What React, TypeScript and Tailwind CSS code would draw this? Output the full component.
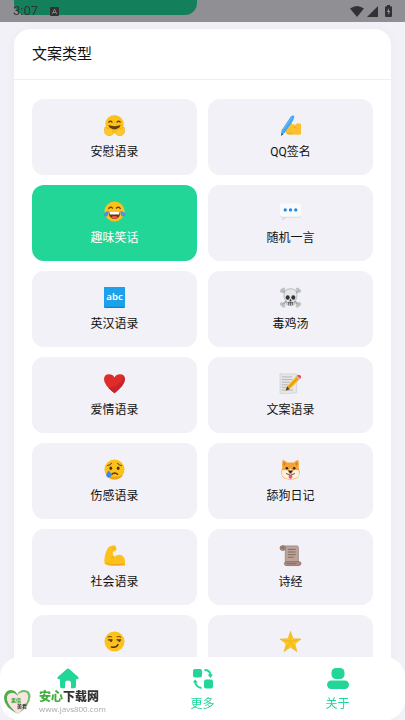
import React from 'react';

const yellowFace = <circle cx="12" cy="12" r="11.500" fill="#fcc21b" />;

const icons = {
  hug: (
    <>
      <circle cx="12" cy="10.5" r="10.5" fill="#fcc21b" />
      <path d="M5.5 8.2q1.8-2.4 3.6 0M14.900 8.200q1.800-2.400 3.600 0" stroke="#5d3b0a" strokeWidth="1.500" fill="none" strokeLinecap="round" />
      <path d="M5 11.500q7 2.500 14 0-1.300 5-7 5t-7-5z" fill="#6a3f10" />
      <path
        d="M.8 14.200q1.200-1 2.200.8l.8 1q3-1.800 5.700.7 2 2.600.4 5.300-2 2.400-5.500 1.500Q1 22.500.5 19z"
        fill="#ffca28"
        stroke="#e9a51c"
        strokeWidth=".7"
      />
      <path
        d="M23.200 14.200q-1.200-1-2.200.8l-.8 1q-3-1.800-5.700.7-2 2.600-.4 5.300 2 2.400 5.500 1.500Q23 22.500 23.500 19z"
        fill="#ffca28"
        stroke="#e9a51c"
        strokeWidth=".7"
      />
    </>
  ),
  write: (
    <>
      <path d="M24 10v12q-4 1-7 .3-5 .8-9-.8-2.500-1-2-2.700l-2.800-.3Q1 17.500 2.500 16l5-4.500 3.500-2.200q1.800-.5 3 .7l3 1.500 3-2z" fill="#fbc02d" />
      <path d="M8 21.300l5 .2M16 14l3 1" stroke="#e09a1a" strokeWidth=".9" />
      <path d="M12.500 1.500Q15-.5 16.500 1.500 16 5 13 9.500L5.500 20 1 23.500l.8-5.700z" fill="#42a5f5" />
      <path d="M14 2L3 18" stroke="#74bff8" strokeWidth="1" />
      <path d="M1.800 20.500L1 24l3-2z" fill="#35617d" />
    </>
  ),
  joy: (
    <>
      {yellowFace}
      <path d="M5.500 8.500q2-3 4.200-.3M14.300 8.200q2.200-2.700 4.200.3" stroke="#5d3b0a" strokeWidth="1.500" fill="none" strokeLinecap="round" />
      <path d="M5.500 12.500h13q0 8-6.500 8t-6.500-8z" fill="#6b3410" />
      <path d="M6.200 12.500h11.600l-.5 3H6.700z" fill="#fff" />
      <path d="M8 18.500q4-2.800 8 0-4 3.300-8 0z" fill="#ff5252" />
      <path d="M5 11Q5.800 16.500 3 17.500q-2.500.7-3.500-1.500-.2-3 5.500-5zM19 11Q18.200 16.500 21 17.500q2.500.7 3.500-1.500.2-3-5.500-5z" fill="#4f8df0" />
    </>
  ),
  speech: (
    <>
      <path d="M2.500 3h19Q24 3 24 5.500v11q0 2.500-2.500 2.500H6.500Q5 22 2 22q1.500-1.500 1-3Q0 19 0 16.500v-11Q0 3 2.500 3z" fill="#d7dce0" />
      <path d="M2.500 2.500h19Q24 2.500 24 5v10.500q0 2.500-2.500 2.500h-19Q0 18 0 15.500V5q0-2.500 2.500-2.500z" fill="#fafafa" />
      <circle cx="6" cy="10.200" r="1.900" fill="#1e88e5" />
      <circle cx="12" cy="10.200" r="1.900" fill="#1e88e5" />
      <circle cx="18" cy="10.200" r="1.900" fill="#1e88e5" />
    </>
  ),
  abc: (
    <>
      <rect width="24" height="24" rx="1.500" fill="#0288d1" />
      <rect width="24" height="22.500" rx="1.500" fill="#1da1ea" />
      <text x="12" y="15" textAnchor="middle" className="font-['Noto_Sans',sans-serif] text-[11px] font-semibold" fill="#fff">
        abc
      </text>
    </>
  ),
  skull: (
    <>
      <path d="M3 4.500l18 15.500M21 4.500L3 20" stroke="#a9adb0" strokeWidth="2.200" />
      <g fill="#c5c9cb" stroke="#9a9ea1" strokeWidth=".5">
        <circle cx="2" cy="4.500" r="1.700" />
        <circle cx="4" cy="2.800" r="1.700" />
        <circle cx="22" cy="4.500" r="1.700" />
        <circle cx="20" cy="2.800" r="1.700" />
        <circle cx="2" cy="19.500" r="1.700" />
        <circle cx="4" cy="21.500" r="1.700" />
        <circle cx="22" cy="19.500" r="1.700" />
        <circle cx="20" cy="21.500" r="1.700" />
      </g>
      <path d="M12 2q7.500 0 7.500 8 0 3-1.500 5l-1.500 1v4q-4.500 2.500-9 0v-4L6 15q-1.500-2-1.500-5 0-8 7.500-8z" fill="#e4e7e8" stroke="#9a9ea1" strokeWidth=".7" />
      <ellipse cx="8.800" cy="12" rx="2.300" ry="2.500" fill="#333" />
      <ellipse cx="15.200" cy="12" rx="2.300" ry="2.500" fill="#333" />
      <path d="M12 13.500l1.500 2.700h-3z" fill="#333" />
      <path d="M8.500 18h7M10 17v4M12 17v4M14 17v4" stroke="#444" strokeWidth=".9" />
    </>
  ),
  heart: (
    <>
      <path d="M12 23Q0 14 0 7.500 0 1.500 5.800 1.500 10 1.500 12 5q2-3.500 6.200-3.500Q24 1.500 24 7.500 24 14 12 23z" fill="#e02b2b" />
      <path d="M23 4q2 6-3 11-4 5-8 8Q8 20 5 17q12-1 18-13z" fill="#c9242a" />
    </>
  ),
  memo: (
    <>
      <path d="M0 1h19v21.500q-9 1.500-19 .8z" fill="#e5e7e8" stroke="#c4c8ca" strokeWidth=".6" />
      <path d="M2 4.500h12M2 7.500h12M2 10.500h9M2 13.500h7M2 16.500h5M2 19.500h13" stroke="#a5abae" strokeWidth=".9" />
      <path d="M19 3.500l3.500 3.500L11 18.500l-4.500 1.800L8 15z" fill="#fbb917" />
      <path d="M20.800 5.200L9.500 16.800" stroke="#e58b16" strokeWidth="1.300" />
      <path d="M8 15l3 3.500-4.500 1.800z" fill="#574235" />
      <path d="M18 4.500l1.500-1.500 3.500 3.500-1.500 1.500z" fill="#b8bec1" />
      <path d="M19.500 3q1.500-2 3.500-.5t.2 4.200z" fill="#ef4455" />
    </>
  ),
  cry: (
    <>
      {yellowFace}
      <path d="M2 17.500q9 6 20 .5-3.500 5.500-10 5.500T2 17.500z" fill="#f2a117" />
      <path d="M4 7.500Q7 7 8.500 4.800M20 7.500Q17 7 15.500 4.800" stroke="#6d4413" strokeWidth="1.200" fill="none" strokeLinecap="round" />
      <ellipse cx="7.800" cy="10.500" rx="1.600" ry="2" fill="#4e300d" />
      <ellipse cx="16.200" cy="10.500" rx="1.600" ry="2" fill="#4e300d" />
      <path d="M9 17.500q3-3 6.500 0" stroke="#4e300d" strokeWidth="1.600" fill="none" strokeLinecap="round" />
      <path d="M5.500 13q4 4 2.500 7-3 2.200-5 0-1.500-2.500 2.500-7z" fill="#4285e8" />
    </>
  ),
  dog: (
    <>
      <path d="M3 1q3 0 5 3h8q2-3 5-3 1 4 .3 8l1.200 6q-1 7-5.500 7.500-5 2-10 0-5-.5-5.500-7.500L2.700 9Q2 5 3 1z" fill="#f6a133" />
      <path d="M4.200 3.300Q5.800 4 6.500 5.500L4.500 8zM19.800 3.300Q18.200 4 17.500 5.500l2 2.500z" fill="#c77a35" />
      <path d="M2.500 13Q7 11 10 14l2-3.500 2 3.500q3-3 7.500-1 2 7.500-5 9.200-4.500 1.800-9 0-7-1.700-5-9.200z" fill="#fff1dc" />
      <circle cx="7.800" cy="10.500" r="1.500" fill="#3b2a22" />
      <circle cx="16.200" cy="10.500" r="1.500" fill="#3b2a22" />
      <path d="M9.500 13h5q0 3-2.500 3t-2.500-3z" fill="#302522" />
      <path d="M7 16.500q2.500 2 5 .5 2.500 1.500 5-.5" stroke="#4a3328" strokeWidth="1" fill="none" />
      <path d="M10 18h4v3.500q-2 2.500-4 0z" fill="#f0567a" />
    </>
  ),
  muscle: (
    <>
      <path
        d="M9 .8q3-1.300 4.500 1 1.500 2.700 0 4.700-1.700 1.300-3.300.7-.7 2.800 1.300 6.300 5-4 9.500-1.200 3 2.500 3 5.700v5.500q-9 1-17.500.2Q.5 23 .3 18.500.8 8 5 2.800 6.500 1 9 .8z"
        fill="#fcc21b"
      />
      <path d="M11.500 13.500q-1.500.3-3.500 2M1 21q9 2.500 22.500 1" stroke="#ea9f17" strokeWidth="1" fill="none" />
      <path d="M9 4.200l3.500-.8" stroke="#ea9f17" strokeWidth=".8" />
    </>
  ),
  scroll: (
    <>
      <path d="M3 1h16.500q1.500 0 1.500 2v17H6V6z" fill="#bca49a" stroke="#8b7066" strokeWidth=".7" />
      <path d="M0 3.500Q0 .8 3 .8T6.300 3.500Q6 6.500 3 6.300 0 6 0 3.500z" fill="#a98c80" stroke="#7e6258" strokeWidth=".8" />
      <path d="M2 3.500q1.500-1.300 2 .5" stroke="#674d43" fill="none" />
      <path d="M8 19h13.500Q24 19 24 21t-2.500 2.500H8q-3 0-3-2.200T8 19z" fill="#a98c80" stroke="#7e6258" strokeWidth=".8" />
      <path d="M8 21.300h10" stroke="#7e6258" strokeWidth=".8" />
      <path d="M9 5h9M9 8h9M9 11h9M9 14h7" stroke="#7c655c" strokeWidth="1" />
    </>
  ),
  smirk: (
    <>
      {yellowFace}
      <path d="M4.200 7.300q2.500-2 5-.3M14.500 7q2.500-1.700 5 .3" stroke="#7a4b12" strokeWidth="1.200" fill="none" />
      <path d="M4.500 10.200h5.200M14.300 10.200h5.200" stroke="#4e300d" strokeWidth="1.400" />
      <path d="M6.500 10.500h3q0 2-1.500 2t-1.500-2zM16 10.500h3q0 2-1.500 2t-1.500-2z" fill="#4e300d" />
      <path d="M8.500 18.200q5.500 1.300 7.500-2.700" stroke="#4e300d" strokeWidth="1.700" fill="none" strokeLinecap="round" />
    </>
  ),
  star: (
    <>
      <path d="M12 .5l3 8.300 9 .4-7 5.500 2.400 8.800-7.400-5-7.400 5L7 14.700 0 9.200l9-.4z" fill="#fbc91e" stroke="#e9ad18" strokeWidth=".6" />
      <path d="M12 3v9l-9-2 9 2-5.500 9.500L12 12l5.500 9.500L12 12l9-2-9 2" fill="none" stroke="#f1b41b" strokeWidth=".7" />
    </>
  ),
};

const types: { icon: keyof typeof icons; label?: string; active?: boolean }[] = [
  { icon: 'hug', label: '安慰语录' },
  { icon: 'write', label: 'QQ签名' },
  { icon: 'joy', label: '趣味笑话', active: true },
  { icon: 'speech', label: '随机一言' },
  { icon: 'abc', label: '英汉语录' },
  { icon: 'skull', label: '毒鸡汤' },
  { icon: 'heart', label: '爱情语录' },
  { icon: 'memo', label: '文案语录' },
  { icon: 'cry', label: '伤感语录' },
  { icon: 'dog', label: '舔狗日记' },
  { icon: 'muscle', label: '社会语录' },
  { icon: 'scroll', label: '诗经' },
  { icon: 'smirk' },
  { icon: 'star' },
];

function StatusBar() {
  return (
    <div className="fixed inset-x-0 top-0 z-20 flex h-[22px] items-center bg-black/40 px-[13px] text-[#303234]">
      <span className="text-[13px] leading-[22px]">3:07</span>
      <svg className="ml-3 h-[9px] w-[9px]" viewBox="0 0 9 9">
        <rect width="9" height="9" rx="1" fill="currentColor" />
        <path d="M2.300 7L4.500 2l2.200 5M3 5.500h3" stroke="#8b8b8d" strokeWidth=".9" fill="none" />
      </svg>
      <div className="ml-auto flex items-center gap-[3px]">
        <svg className="h-[11px] w-[14px]" viewBox="0 0 14 11" fill="currentColor">
          <path d="M0 2.500Q7-2.500 14 2.500L7 11z" />
        </svg>
        <svg className="h-[11px] w-[11px]" viewBox="0 0 11 11" fill="currentColor">
          <path d="M11 0v11H0z" />
        </svg>
        <svg className="ml-1 h-3 w-[7px]" viewBox="0 0 7 12" fill="currentColor">
          <path d="M2 0h3v1.200h1q1 0 1 1V11q0 1-1 1H1q-1 0-1-1V2.200q0-1 1-1h1z" />
          <path d="M4 3L1.800 7h1.500v3L5.300 6H4z" fill="#929294" />
        </svg>
      </div>
    </div>
  );
}

function Watermark() {
  return (
    <div className="pointer-events-none absolute bottom-1 left-[3px] flex items-center gap-2">
      <svg className="h-7 w-7" viewBox="0 0 28 28">
        <path d="M14 7Q10 1 5 3T1 12q2 8 14 14Q28 17 27.500 9 26 2 20 2.500 16 3 14 7z" fill="#fbe3e1" />
        <path d="M15 26Q1 19 1 10 2 2 8 2q5 0 7 6-4-4-7-3-5 1-4 7 2 7 11 14z" fill="#4cae4a" />
        <path d="M14 7q2-5 7-5 6 0 6.500 6Q27 17 15 26q8-8 10-15 1-7-4-7-4 0-7 3z" fill="#6cc067" />
        <text x="8" y="14" className="text-[5px] font-bold" fill="#35a83a">果值</text>
        <text x="14" y="20" className="text-[5px] font-bold" fill="#333">美看</text>
      </svg>
      <div>
        <div className="text-[12px] font-black leading-[14px] text-[#333]">
          <span className="text-[#3fae3f]">安心</span>下载网
        </div>
        <div className="font-['Open_Sans',sans-serif] text-[8px] leading-[10px] text-[#aaa]">www.javs800.com</div>
      </div>
    </div>
  );
}

function BottomNav() {
  return (
    <nav className="fixed inset-x-0 bottom-0 z-10 grid h-[63px] grid-cols-3 rounded-[20px] bg-white text-[12px] text-[#22d698]">
      <a href="#home" aria-label="首页" className="flex flex-col items-center pt-[11px]">
        <svg className="h-[22px] w-[22px]" viewBox="0 0 22 22" fill="currentColor">
          <path d="M9.500 1.200q1.500-1.200 3 0l8.700 7.900q1 1.600-.7 2.200H19v7q0 2-2 2h-3V15q0-2.500-3-2.500T8 15v5.300H5q-2 0-2-2v-7H1.500q-1.700-.6-.7-2.200z" />
        </svg>
      </a>
      <a href="#more" className="flex flex-col items-center gap-[5px] pt-[11px]">
        <svg className="h-[22px] w-[22px]" viewBox="0 0 22 22" fill="currentColor">
          <rect x="1" y="1" width="9" height="8.500" rx="2" />
          <rect x="12" y="11.500" width="9" height="9" rx="2" />
          <path d="M12.500 2Q18 2 18.500 7M3 13q.5 6 6.500 7" fill="none" stroke="currentColor" strokeWidth="2" />
          <path d="M15.500 6.500h5.500L18.500 10zM.8 14.500L3 11.500l3 3z" />
        </svg>
        更多
      </a>
      <a href="#about" className="flex flex-col items-center gap-[5px] pt-[11px]">
        <svg className="h-[22px] w-[22px]" viewBox="0 0 22 22" fill="currentColor">
          <rect x="4.500" y="0" width="13" height="11" rx="4.500" />
          <rect x="0" y="12.500" width="22" height="8.500" rx="4.200" />
        </svg>
        关于
      </a>
      <Watermark />
    </nav>
  );
}

export default function App() {
  return (
    <div className="h-screen overflow-hidden bg-[#f1f1f7] font-['Roboto','Noto_Sans_CJK_SC',sans-serif] text-[#111]">
      <StatusBar />
      <main className="px-3.5">
        <div className="mr-[194px] h-[15px] rounded-b-xl bg-[#22d698]" />
        <section className="mt-3.5 rounded-2xl bg-white shadow-[0_0_12px_rgba(0,0,0,0.03)]">
          <h1 className="border-b border-[#eeeef0] px-[18px] text-[15px] leading-[50px]">文案类型</h1>
          <div className="grid grid-cols-2 gap-x-[11px] gap-y-2.5 px-[18px] pb-24 pt-[19px]">
            {types.map(({ icon, label, active }) => (
              <button
                key={icon}
                type="button"
                aria-label={label ?? icon}
                className={`flex h-[76px] flex-col items-center gap-[7px] rounded-xl pt-4 text-[12px] leading-[18px] ${
                  active ? 'bg-[#22d698] text-white' : 'bg-[#f1f1f7]'
                }`}
              >
                <svg className="h-[21px] w-[21px] overflow-visible" viewBox="0 0 24 24" aria-hidden="true">
                  {icons[icon]}
                </svg>
                {label}
              </button>
            ))}
          </div>
        </section>
      </main>
      <BottomNav />
    </div>
  );
}
